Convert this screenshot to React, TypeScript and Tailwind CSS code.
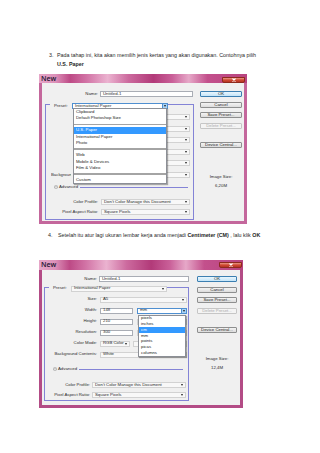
import React from "react";

type Entry = string | null;

const ui = "font-['Liberation_Sans','DejaVu_Sans',sans-serif]";

function Caret() {
  return (
    <span className="inline-block h-0 w-0 border-x-[1.5px] border-t-[2px] border-x-transparent border-t-[#1f1f1f]" />
  );
}

function Field({ value, className = "" }: { value: string; className?: string }) {
  return (
    <div
      className={`flex h-[6px] shrink-0 items-center border border-[#a9adb5] bg-white pl-[2px] ${className}`}
    >
      {value}
    </div>
  );
}

function Combo({
  value,
  className = "",
  menu,
}: {
  value: string;
  className?: string;
  menu?: React.ReactNode;
}) {
  const open = Boolean(menu);
  return (
    <div
      className={`flex h-[6px] items-center border ${
        open ? "relative border-[#4f8fd0] bg-white" : "border-[#d2d2d2] bg-[#f8f8f8]"
      } ${className}`}
    >
      <span className="flex-1 overflow-hidden whitespace-nowrap pl-[2px]">{value}</span>
      {open ? (
        <span className="flex h-full w-[5px] items-center justify-center border-l border-[#4f8fd0] bg-[#a8d3f6]">
          <Caret />
        </span>
      ) : (
        <span className="mr-[2px] flex">
          <Caret />
        </span>
      )}
      {menu}
    </div>
  );
}

function Menu({
  items,
  active,
  itemH,
  className = "",
}: {
  items: Entry[];
  active: string;
  itemH: string;
  className?: string;
}) {
  return (
    <div
      className={`absolute left-0 z-10 w-full border border-[#8c8f96] bg-white shadow-[1px_1px_1px_rgba(0,0,0,0.3)] ${className}`}
    >
      {items.map((it, i) =>
        it === null ? (
          <div key={i} className="flex h-[6px] items-center">
            <div className="h-[1.5px] w-full bg-[#a4a4a4]" />
          </div>
        ) : (
          <div
            key={i}
            className={`flex items-center whitespace-nowrap pl-[2px] ${itemH} ${
              it === active ? "bg-[#3399ff] text-white" : "text-[#222]"
            }`}
          >
            {it}
          </div>
        )
      )}
    </div>
  );
}

function Btn({ label, kind = "plain", className = "" }: { label: string; kind?: string; className?: string }) {
  const look =
    kind === "default"
      ? "border-[#3c7fb1] bg-[linear-gradient(#eaf6fd,#c4e5f9)] text-[#222]"
      : kind === "off"
      ? "border-[#c6c6c6] bg-[#f4f4f4] text-[#a9a9a9]"
      : "border-[#8e8f8f] bg-[linear-gradient(#f4f4f4,#dcdcdc)] text-[#222]";
  return (
    <div
      className={`flex h-[6px] shrink-0 items-center justify-center rounded-[1px] border whitespace-nowrap ${look} ${className}`}
    >
      {label}
    </div>
  );
}

function Row({
  label,
  h,
  labelW = "w-[52px]",
  gap = "ml-[3px]",
  mr,
  children,
}: {
  label: React.ReactNode;
  h: string;
  labelW?: string;
  gap?: string;
  mr: string;
  children: React.ReactNode;
}) {
  return (
    <div className={`flex items-center ${h}`}>
      <div className={`shrink-0 whitespace-nowrap text-right ${labelW}`}>{label}</div>
      <div className={`flex flex-1 items-center ${gap} ${mr}`}>{children}</div>
    </div>
  );
}

function AdvancedIcon() {
  return (
    <svg width="4" height="4" viewBox="0 0 8 8" className="mr-[1px] shrink-0">
      <circle cx="4" cy="4" r="3.4" fill="#f4f4f4" stroke="#8a8a8a" strokeWidth="0.9" />
      <path d="M2.4 4.8 L4 3.1 L5.6 4.8" fill="none" stroke="#333" strokeWidth="1" />
    </svg>
  );
}

function Dialog({ first }: { first: boolean }) {
  const rowH = first ? "h-[11.5px]" : "h-[11px]";
  const mr = first ? "mr-[3px]" : "mr-[1px]";
  // in the first dialog the preset list hides these rows, so only their frames show
  const hid = (s: string) => (first ? "" : s);

  const presetMenu = first ? (
    <Menu
      className="top-full"
      itemH="h-[6.3px]"
      active="U.S. Paper"
      items={[
        "Clipboard",
        "Default Photoshop Size",
        null,
        "U.S. Paper",
        "International Paper",
        "Photo",
        null,
        "Web",
        "Mobile & Devices",
        "Film & Video",
        null,
        "Custom",
      ]}
    />
  ) : undefined;

  const unitMenu = first ? undefined : (
    <Menu
      className="top-[calc(100%+2px)]"
      itemH="h-[5.8px]"
      active="cm"
      items={["pixels", "inches", "cm", "mm", "points", "picas", "columns"]}
    />
  );

  return (
    <div
      className={`flex flex-col ${ui} text-[4.3px] leading-none text-[#2b2b2b] ${
        first ? "h-[150px] w-[208px]" : "h-[148px] w-[204px]"
      }`}
    >
      {/* title bar */}
      <div
        className={`flex shrink-0 items-start justify-between bg-[linear-gradient(90deg,#e6a6c8_0%,#dc90b8_8%,#bd4a86_15%,#d274a6_23%,#ebb3d0_33%,#cc6a9e_43%,#b23a79_55%,#c95f98_64%,#e6a8c8_72%,#c3508c_81%,#b8447f_100%)] ${
          first ? "h-[9px]" : "h-[10px]"
        }`}
      >
        <span className="ml-[2px] mt-[1px] font-['Open_Sans',sans-serif] text-[7px] font-semibold leading-[8px] text-[#1c1530]">
          New
        </span>
        <div
          className={`flex h-[6px] w-[23px] items-center justify-center rounded-b-[2px] border border-[#8d2a1e] bg-[linear-gradient(#eb9a86,#cf4a33_50%,#b83323)] ${
            first ? "mr-[2px] mt-[3px]" : "mr-[1px] mt-[2px]"
          }`}
        >
          <svg width="6" height="4" viewBox="0 0 6 4">
            <path d="M1.5 0.5 L4.5 3.5 M4.5 0.5 L1.5 3.5" stroke="#fff" strokeWidth="1.1" />
          </svg>
        </div>
      </div>

      {/* body */}
      <div
        className={`flex flex-1 border-x-[3px] border-b-[3px] bg-[#f0f0f0] ${
          first ? "border-[#c4679c] pl-[3px]" : "border-[#b34c86] pl-[2px]"
        }`}
      >
        {/* left column */}
        <div className="flex flex-col">
          <div className={`flex h-[6px] items-center ${first ? "mt-[8px]" : "mt-[6px]"}`}>
            <div className="w-[54px] shrink-0 pr-[1px] text-right">Name:</div>
            <Field value="Untitled-1" className={first ? "ml-[1px] w-[93px]" : "ml-[1px] w-[90px]"} />
          </div>

          <div
            className={`flex flex-col border border-[#8383d6] ${
              first ? "mt-[7px] w-[149px] pb-[2px]" : "mt-[5px] w-[145px]"
            }`}
          >
            {/* preset row sits on the top edge */}
            <div className={`-mt-[5px] flex items-center ${rowH}`}>
              <div className="ml-[4px] flex h-[7px] items-center bg-[#f0f0f0] pl-[4px]">
                <span className="w-[16px] shrink-0 whitespace-nowrap">Preset:</span>
                <Combo value="International Paper" className="ml-[2px] w-[96px]" menu={presetMenu} />
              </div>
            </div>

            <Row label={hid("Size:")} h={rowH} mr={mr}>
              <Combo value={hid("A5")} className="flex-1" />
            </Row>
            <Row label={hid("Width:")} h={rowH} mr={mr}>
              <Field value={hid("148")} className="w-[33px]" />
              <Combo value={hid("mm")} className="ml-[4px] flex-1" menu={unitMenu} />
            </Row>
            <Row label={hid("Height:")} h={rowH} mr={mr}>
              <Field value={hid("210")} className="w-[33px]" />
              <Combo value="" className="ml-[4px] flex-1" />
            </Row>
            <Row label={hid("Resolution:")} h={rowH} mr={mr}>
              <Field value={hid("300")} className="w-[33px]" />
              <Combo value="" className="ml-[4px] flex-1" />
            </Row>
            <Row label={hid("Color Mode:")} h={rowH} mr={mr}>
              <Combo value={hid("RGB Color")} className="w-[30px]" />
              <Combo value="" className="ml-[3px] flex-1" />
            </Row>
            <Row
              label={
                first ? (
                  <span className="ml-[5px] block w-[20px] overflow-hidden text-left">Background</span>
                ) : (
                  "Background Contents:"
                )
              }
              h={rowH}
              mr={mr}
            >
              <Combo value={hid("White")} className="flex-1" />
            </Row>

            <div className={`flex h-[10px] items-center pl-[8px] ${first ? "mt-[1.5px]" : "mt-[4px]"}`}>
              <AdvancedIcon />
              <span>Advanced</span>
              <div className="ml-[2px] mr-[5px] h-px flex-1 bg-[#8383d6]" />
            </div>

            <div className={first ? "mt-[5px]" : "mt-[6px]"}>
              <Row
                label="Color Profile:"
                h="h-[10px]"
                labelW={first ? "w-[52px]" : "w-[45px]"}
                gap={first ? "ml-[3px]" : "ml-[2px]"}
                mr={first ? "mr-[3px]" : "mr-[2px]"}
              >
                <Combo value="Don't Color Manage this Document" className="flex-1" />
              </Row>
              <Row
                label="Pixel Aspect Ratio:"
                h="h-[10px]"
                labelW={first ? "w-[52px]" : "w-[45px]"}
                gap={first ? "ml-[3px]" : "ml-[2px]"}
                mr={first ? "mr-[3px]" : "mr-[2px]"}
              >
                <Combo value="Square Pixels" className="flex-1" />
              </Row>
            </div>
          </div>
        </div>

        {/* right column */}
        <div className={`flex flex-col ${first ? "ml-[6px] w-[42px] pt-[8px]" : "ml-[8px] w-[40px] pt-[6px]"}`}>
          <Btn label="OK" kind="default" />
          <Btn label="Cancel" className="mt-[4.7px]" />
          <Btn label="Save Preset..." className="mt-[4.7px]" />
          <Btn label="Delete Preset..." kind="off" className="mt-[4.7px]" />
          <Btn label="Device Central..." className="mt-[13px]" />
          <div className={`flex h-[6px] items-center justify-center ${first ? "mt-[26px]" : "mt-[23px]"}`}>
            Image Size:
          </div>
          <div className="mt-[3px] flex h-[6px] items-center justify-center">{first ? "6,20M" : "12,4M"}</div>
        </div>
      </div>
    </div>
  );
}

export default function App() {
  return (
    <div className="h-[453px] w-[320px] overflow-hidden bg-white font-['Liberation_Sans',Arial,sans-serif] text-[5.35px] leading-[9px] text-[#1f1f1f]">
      <div className="flex pl-[49px] pt-[51px]">
        <span className="w-[8px] shrink-0">3.</span>
        <div>
          <p className="whitespace-nowrap">
            Pada tahap ini, kita akan memilih jenis kertas yang akan digunakan. Contohnya pilih
          </p>
          <p className="font-bold">U.S. Paper</p>
        </div>
      </div>

      <div className="mt-[5px] pl-[39px]">
        <Dialog first />
      </div>

      <div className="mt-[7px] flex pl-[48px]">
        <span className="w-[10px] shrink-0">4.</span>
        <p className="whitespace-nowrap">
          Setelah itu atur lagi ukuran lembar kerja anda menjadi <b>Centimeter (CM)</b> , lalu klik <b>OK</b>
        </p>
      </div>

      <div className="mt-[20px] pl-[39px]">
        <Dialog first={false} />
      </div>
    </div>
  );
}
